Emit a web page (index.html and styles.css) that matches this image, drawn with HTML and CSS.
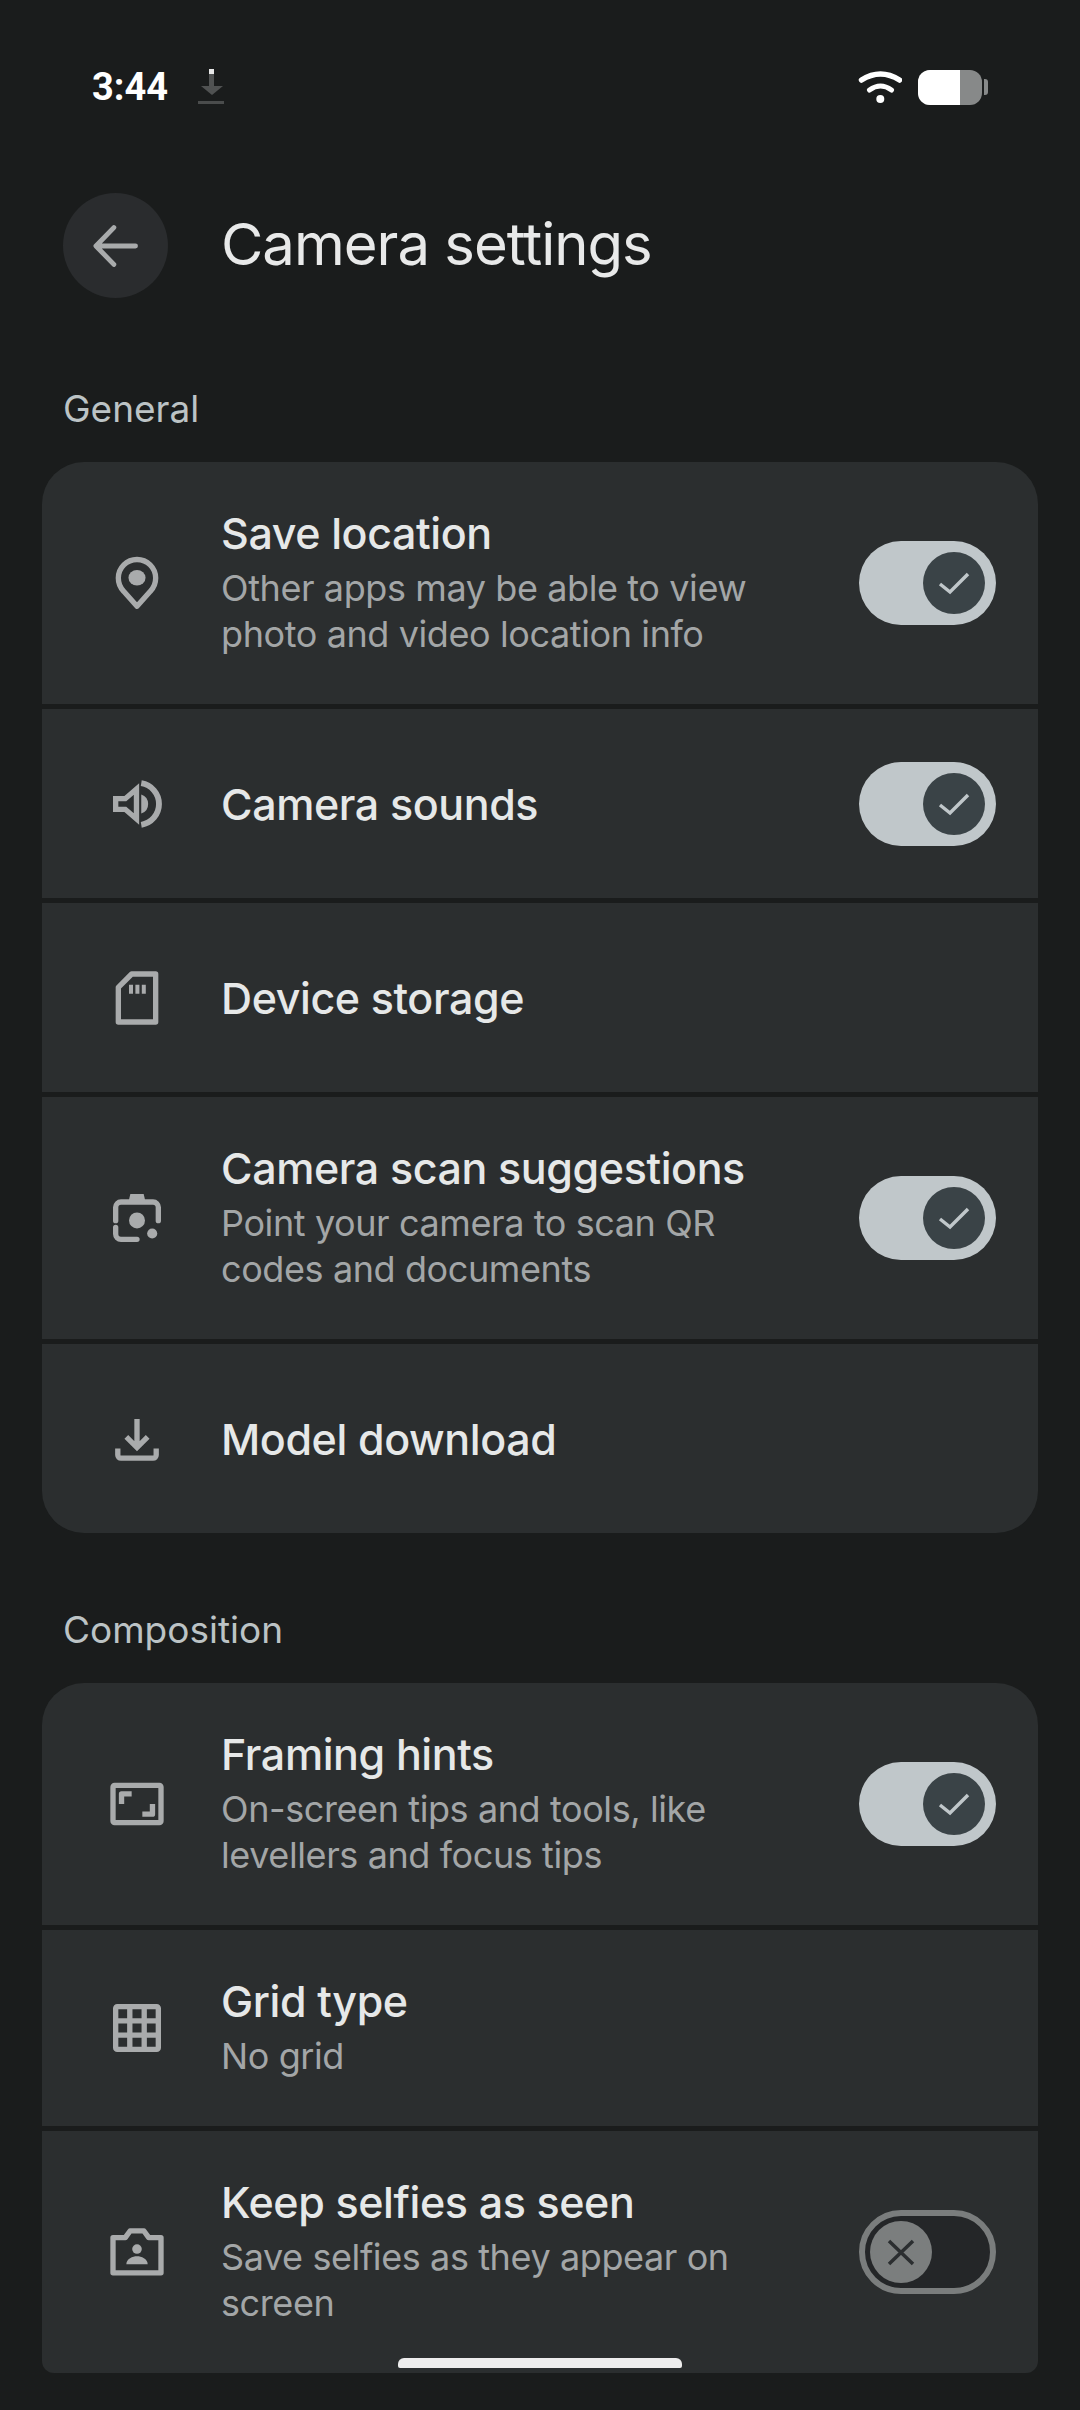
FILE: index.html
```html
<!DOCTYPE html>
<html lang="en">
<head>
  <meta charset="UTF-8">
  <title>Camera settings</title>
  <link rel="stylesheet" href="styles.css">
</head>
<body>
  <div class="status-bar">
    <span class="time">3:44</span>
    <svg class="status-dl" viewBox="0 0 26 36">
      <rect x="11" y="5" width="5" height="13" fill="#505252"/>
      <rect x="11" y="0" width="5" height="5" fill="#e8e8e8"/>
      <path d="M3 17h22l-11 9z" fill="#505252"/>
      <rect x="0" y="32" width="26" height="3" fill="#4a4c4c"/>
    </svg>
    <svg class="status-wifi" viewBox="0 0 44 32" fill="none" stroke="#fff" stroke-linecap="round">
      <path d="M3.5 9Q22.5 -3 41.5 9" stroke-width="5.5"/>
      <path d="M11.5 19Q22.5 11 33.5 19" stroke-width="5"/>
      <circle cx="22.3" cy="28" r="4" fill="#fff" stroke="none"/>
    </svg>
    <div class="battery">
      <div class="battery-body"><div class="battery-fill"></div></div>
      <div class="battery-nub"></div>
    </div>
  </div>

  <div class="top-bar">
    <button class="back-btn" aria-label="Back">
      <svg viewBox="0 0 48 48" fill="none" stroke="#a9abac" stroke-width="4.5" stroke-linecap="round" stroke-linejoin="round">
        <path d="M42 24H6.5M22 7L5.5 24L22 41"/>
      </svg>
    </button>
    <h1>Camera settings</h1>
  </div>

  <h2 class="section-title">General</h2>
  <div class="card">
    <div class="row">
      <svg class="row-icon" viewBox="0 0 24 24" fill="none" stroke="#a9abac" stroke-width="2" stroke-linejoin="round">
        <path d="M12 20.7L7 15.1A7 7 0 1 1 17 15.1Z"/>
        <ellipse cx="12" cy="10" rx="3.2" ry="2.9" fill="#a9abac" stroke="none"/>
      </svg>
      <div class="row-text">
        <div class="row-title">Save location</div>
        <div class="row-sub">Other apps may be able to view photo and video location info</div>
      </div>
      <div class="switch on">
        <div class="thumb"><svg viewBox="0 0 62 62"><path d="M17 32l10 8 18-18"/></svg></div>
      </div>
    </div>
    <div class="row">
      <svg class="row-icon" viewBox="0 0 24 24" fill="none" stroke="#a9abac" stroke-width="2">
        <path d="M4 10v4h3.6l4.2 3.6V6.4L7.6 10z"/>
        <path d="M13.6 8.4a3.8 3.8 0 0 1 0 7.2z" fill="#a9abac" stroke="none"/>
        <path d="M13.6 4.2a7.9 7.9 0 0 1 0 15.6" stroke-width="2.2"/>
      </svg>
      <div class="row-text">
        <div class="row-title">Camera sounds</div>
      </div>
      <div class="switch on">
        <div class="thumb"><svg viewBox="0 0 62 62"><path d="M17 32l10 8 18-18"/></svg></div>
      </div>
    </div>
    <div class="row">
      <svg class="row-icon" viewBox="0 0 24 24" fill="none" stroke="#a9abac" stroke-width="2" stroke-linejoin="round">
        <path d="M10 3H19V21H5V8z"/>
        <path d="M9 7h1.5v3.4H9zM11.4 7h1.5v3.4h-1.5zM13.8 7h1.5v3.4h-1.5z" fill="#a9abac" stroke="none"/>
      </svg>
      <div class="row-text">
        <div class="row-title">Device storage</div>
      </div>
    </div>
    <div class="row">
      <svg class="row-icon" viewBox="0 0 24 24" fill="none" stroke="#a9abac" stroke-width="2" stroke-linecap="round">
        <path d="M4 13V8a2 2 0 0 1 2-2h12a2 2 0 0 1 2 2v5M4 15.5V18a2 2 0 0 0 2 2h6"/>
        <path d="M8.8 6l.7-3h5l.7 3z" fill="#a9abac" stroke="none"/>
        <circle cx="12" cy="12.9" r="3" fill="#a9abac" stroke="none"/>
        <circle cx="17.7" cy="17.8" r="1.9" fill="#a9abac" stroke="none"/>
      </svg>
      <div class="row-text">
        <div class="row-title">Camera scan suggestions</div>
        <div class="row-sub">Point your camera to scan QR codes and documents</div>
      </div>
      <div class="switch on">
        <div class="thumb"><svg viewBox="0 0 62 62"><path d="M17 32l10 8 18-18"/></svg></div>
      </div>
    </div>
    <div class="row">
      <svg class="row-icon" viewBox="0 0 24 24" fill="none" stroke="#a9abac" stroke-width="2">
        <path d="M12 4.5V15M8 11.2l4 4 4-4"/>
        <path d="M4.8 15.6V18a1.2 1.2 0 0 0 1.2 1.2H18a1.2 1.2 0 0 0 1.2-1.2v-2.4"/>
      </svg>
      <div class="row-text">
        <div class="row-title">Model download</div>
      </div>
    </div>
  </div>

  <h2 class="section-title">Composition</h2>
  <div class="card card-open">
    <div class="row">
      <svg class="row-icon" viewBox="0 0 24 24" fill="none" stroke="#a9abac" stroke-width="2" stroke-linejoin="round">
        <rect x="3" y="5" width="18" height="14" rx="0.6"/>
        <path d="M6.2 12V8.2H10M17.8 12v3.8H14"/>
      </svg>
      <div class="row-text">
        <div class="row-title">Framing hints</div>
        <div class="row-sub">On-screen tips and tools, like levellers and focus tips</div>
      </div>
      <div class="switch on">
        <div class="thumb"><svg viewBox="0 0 62 62"><path d="M17 32l10 8 18-18"/></svg></div>
      </div>
    </div>
    <div class="row">
      <svg class="row-icon" viewBox="0 0 24 24" fill="none" stroke="#a9abac" stroke-width="2">
        <rect x="4" y="4" width="16" height="16" rx="0.6"/>
        <path d="M9.3 4v16M14.7 4v16M4 9.3h16M4 14.7h16"/>
      </svg>
      <div class="row-text">
        <div class="row-title">Grid type</div>
        <div class="row-sub">No grid</div>
      </div>
    </div>
    <div class="row">
      <svg class="row-icon" viewBox="0 0 24 24" fill="none" stroke="#a9abac" stroke-width="2" stroke-linejoin="round">
        <path d="M3 6.6H7.6L9.4 4.1H14.6L16.4 6.6H21V19.8H3Z"/>
        <circle cx="12" cy="10.9" r="1.8" fill="#a9abac" stroke="none"/>
        <path d="M8 16.6c0-2 2.4-3 4-3s4 1 4 3z" fill="#a9abac" stroke="none"/>
      </svg>
      <div class="row-text">
        <div class="row-title">Keep selfies as seen</div>
        <div class="row-sub">Save selfies as they appear on screen</div>
      </div>
      <div class="switch off">
        <div class="thumb"><svg viewBox="0 0 62 62"><path d="M19 20l24 23M43 20L19 43"/></svg></div>
      </div>
    </div>
  </div>

  <div class="home-bar"></div>
</body>
</html>
```

FILE: styles.css
```css
html, body {
  margin: 0;
  height: 2410px;
  overflow: hidden;
}
body {
  position: relative;
  background: #1a1c1c;
  color: #e6e8e8;
  font-family: 'Inter', 'Noto Sans', sans-serif;
}

/* status bar */
.status-bar {
  display: flex;
  align-items: center;
  height: 36px;
  padding: 69px 92px 0 92px;
}
.time {
  font-family: 'Roboto', sans-serif;
  font-weight: 700;
  font-size: 38px;
  line-height: 36px;
  color: #fff;
}
.status-dl {
  width: 26px;
  height: 36px;
  margin-left: 30px;
}
.status-wifi {
  width: 44px;
  height: 32px;
  margin-left: auto;
}
.battery {
  display: flex;
  align-items: center;
  margin-left: 16px;
}
.battery-body {
  width: 64px;
  height: 35px;
  border-radius: 12px;
  background: #878989;
  overflow: hidden;
}
.battery-fill {
  width: 42px;
  height: 100%;
  background: #fff;
}
.battery-nub {
  width: 4px;
  height: 16px;
  margin-left: 2px;
  border-radius: 0 3px 3px 0;
  background: #878989;
}

/* title row */
.top-bar {
  display: flex;
  align-items: center;
  padding: 88px 0 0 63px;
}
.back-btn {
  width: 105px;
  height: 105px;
  padding: 0;
  border: none;
  border-radius: 50%;
  background: #2a2c2e;
  display: flex;
  align-items: center;
  justify-content: center;
}
.back-btn svg {
  width: 52px;
  height: 52px;
}
h1 {
  margin: 0 0 3px 53px;
  font-size: 58px;
  font-weight: 400;
  line-height: 66px;
  letter-spacing: -1px;
  color: #e8e9e9;
}

/* lists */
.section-title {
  margin: 88px 0 30px 63px;
  font-size: 37px;
  font-weight: 400;
  line-height: 46px;
  color: #bcc3c5;
}
.card {
  margin: 0 42px;
  display: flex;
  flex-direction: column;
  gap: 5px;
  border-radius: 42px;
  overflow: hidden;
}
.card + .section-title {
  margin-top: 74px;
}
.card-open {
  border-radius: 42px 42px 12px 12px;
}
.row {
  display: flex;
  align-items: center;
  box-sizing: border-box;
  min-height: 189px;
  padding: 40.5px 42px 40.5px 63px;
  background: #2b2e2f;
}
.row-icon {
  flex: none;
  width: 64px;
  height: 64px;
  margin-right: 52px;
}
.row-text {
  flex: 1;
}
.row-title {
  font-size: 43px;
  font-weight: 500;
  line-height: 60px;
  letter-spacing: -0.4px;
  color: #e6e8e8;
}
.row-sub {
  margin-top: 2px;
  padding-bottom: 7px;
  font-size: 36px;
  line-height: 46px;
  letter-spacing: -0.4px;
  color: #a3a6a7;
}

/* switches */
.switch {
  flex: none;
  box-sizing: border-box;
  width: 137px;
  height: 84px;
  margin-left: 38px;
  border-radius: 42px;
  display: flex;
  align-items: center;
}
.switch.on {
  justify-content: flex-end;
  padding-right: 11px;
  background: #c0c7ca;
}
.switch.off {
  padding-left: 5px;
  border: 6px solid #7a7d7d;
  background: #242628;
}
.thumb {
  width: 62px;
  height: 62px;
  border-radius: 50%;
}
.thumb svg {
  display: block;
  width: 62px;
  height: 62px;
  fill: none;
  stroke-width: 3.5;
}
.on .thumb {
  background: #3a4347;
}
.on .thumb svg {
  stroke: #c0c7ca;
}
.off .thumb {
  background: #7b7e7e;
}
.off .thumb svg {
  stroke: #2b2e30;
}

/* gesture handle over the list */
.home-bar {
  position: absolute;
  left: 398px;
  top: 2358px;
  width: 284px;
  height: 10px;
  border-radius: 6px 6px 2px 2px;
  background: #ededed;
}
```
